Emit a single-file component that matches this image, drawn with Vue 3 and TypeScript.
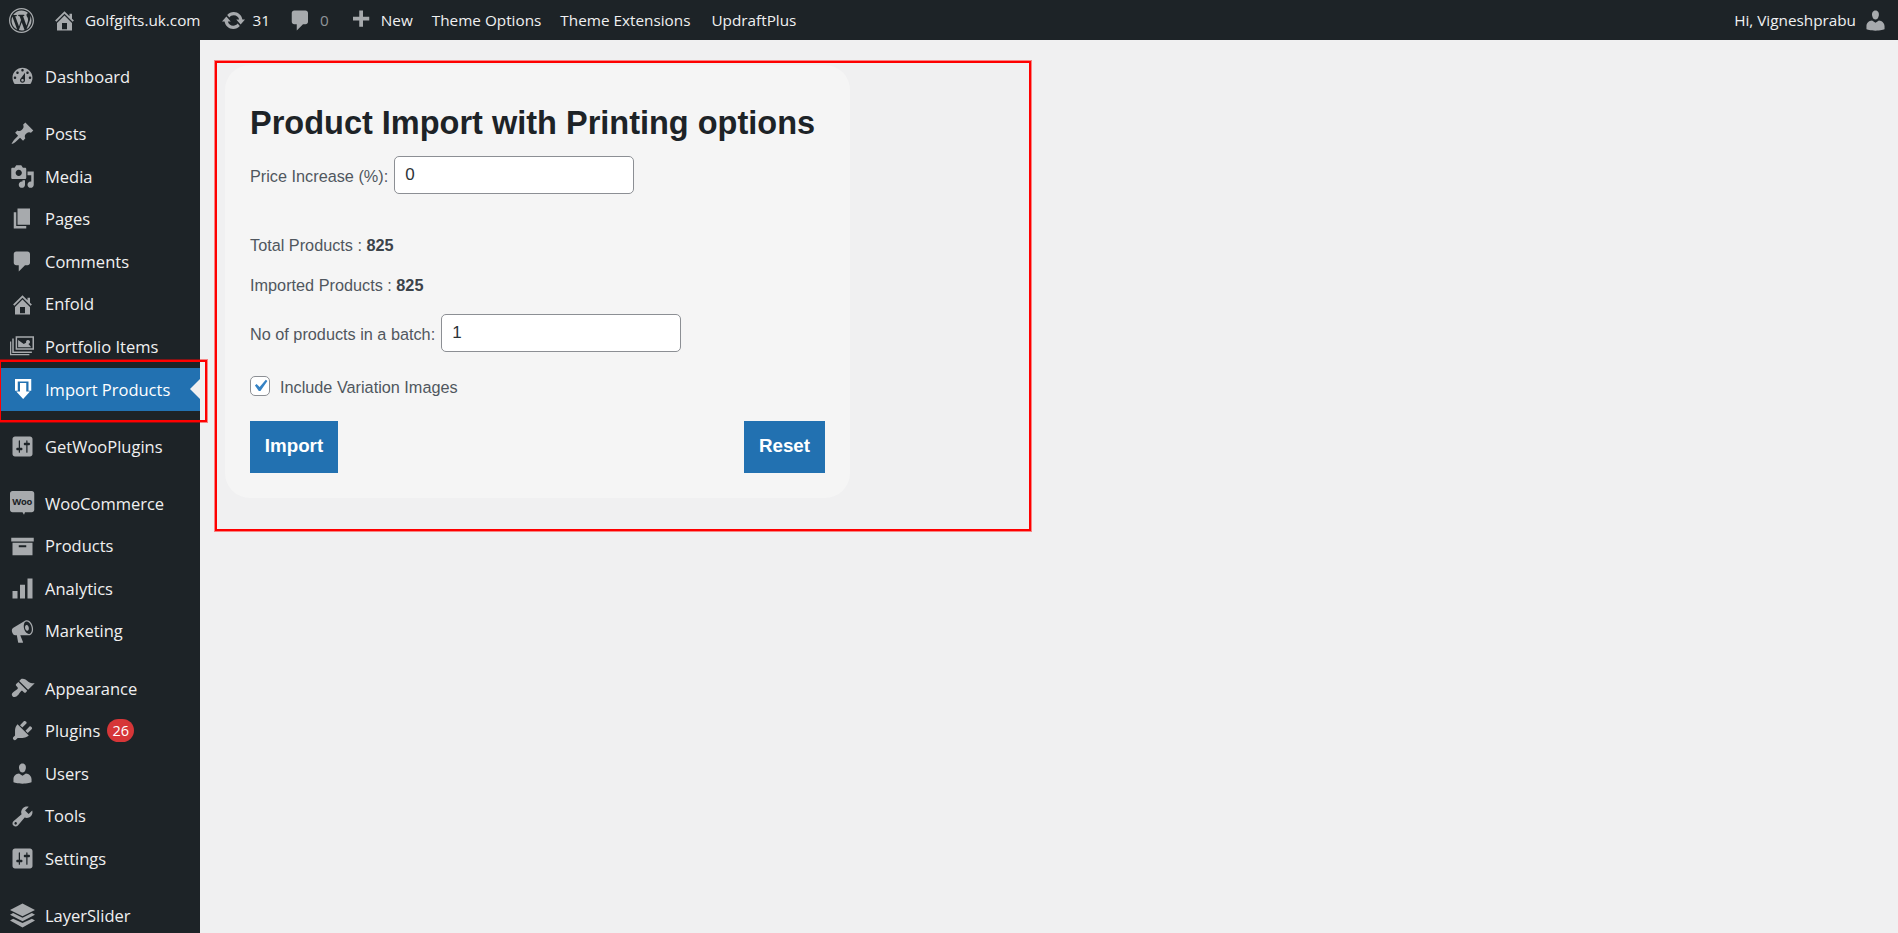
<script setup lang="ts">
interface MenuItem {
  label: string
  icon: string
  gap?: boolean
  current?: boolean
  badge?: string
  woo?: boolean
}

const icons: Record<string, string> = {
  logo: 'M20 10c0-5.52-4.48-10-10-10S0 4.48 0 10s4.48 10 10 10 10-4.48 10-10zM10 1.01c4.96 0 8.99 4.02 8.99 8.99s-4.03 8.99-8.99 8.99S1.01 14.96 1.01 10 5.04 1.01 10 1.01zM8.01 14.82L4.96 6.61c.49-.03 1.05-.08 1.05-.08.43-.05.38-1.01-.06-.99 0 0-1.29.1-2.13.1-.15 0-.33 0-.52-.01 1.44-2.17 3.9-3.6 6.7-3.6 2.09 0 3.99.79 5.41 2.09-.6-.08-1.45.35-1.45 1.42 0 .66.38 1.22.79 1.88.31.54.5 1.22.5 2.21 0 1.34-1.27 4.48-1.27 4.48l-2.71-7.5c.48-.03.75-.16.75-.16.43-.05.38-1.1-.05-1.08 0 0-1.3.11-2.14.11-.78 0-2.11-.11-2.11-.11-.43-.02-.48 1.06-.05 1.08l.84.08 1.12 3.04zm6.02 2.15L16.64 10s.67-1.69.39-3.81c.63 1.14.94 2.42.94 3.81 0 2.96-1.56 5.58-3.94 6.97zM2.68 6.77L6.5 17.25c-2.67-1.3-4.47-4.08-4.47-7.25 0-1.16.2-2.23.65-3.23zm7.45 4.53l2.29 6.25c-.75.27-1.57.42-2.42.42-.72 0-1.41-.11-2.06-.3z',
  home: 'M16 8.5l1.53 1.53-1.06 1.06L10 4.62l-6.47 6.47-1.06-1.06L10 2.5l4 4v-2h2v4zm-6-2.46l6 5.99V18H4v-5.97zM12 17v-5H8v5h4z',
  update: 'M10.2 3.28c3.53 0 6.43 2.61 6.92 6h2.08l-3.5 4-3.5-4h2.32c-.45-1.97-2.21-3.45-4.32-3.45-1.45 0-2.73.71-3.54 1.78L4.95 5.66C6.23 4.2 8.11 3.28 10.2 3.28zm-.4 13.44c-3.52 0-6.43-2.61-6.92-6H.8l3.5-4c1.17 1.33 2.33 2.67 3.5 4H5.48c.45 1.97 2.21 3.45 4.32 3.45 1.45 0 2.73-.71 3.54-1.78l1.71 1.95c-1.28 1.46-3.15 2.38-5.25 2.38z',
  comment: 'M5 2h9c1.1 0 2 .9 2 2v7c0 1.1-.9 2-2 2h-2l-5 5v-5H5c-1.1 0-2-.9-2-2V4c0-1.1.9-2 2-2z',
  plus: 'M17 7v3h-5v5H9v-5H4V7h5V2h3v5h5z',
  user: 'M10 9.25c-2.27 0-2.73-3.44-2.73-3.44C7 4.02 7.82 2 9.97 2c2.16 0 2.98 2.02 2.71 3.81 0 0-.41 3.44-2.68 3.44zm0 2.57L12.72 10c2.39 0 4.52 2.33 4.52 4.53v2.49s-3.65 1.13-7.24 1.13c-3.65 0-7.24-1.13-7.24-1.13v-2.49c0-2.25 1.94-4.48 4.47-4.48z',
  dashboard: 'M3.76 16h12.48c1.1-1.37 1.76-3.11 1.76-5 0-4.42-3.58-8-8-8s-8 3.58-8 8c0 1.89.66 3.63 1.76 5zM10 4c.55 0 1 .45 1 1s-.45 1-1 1-1-.45-1-1 .45-1 1-1zM6 6c.55 0 1 .45 1 1s-.45 1-1 1-1-.45-1-1 .45-1 1-1zm8 0c.55 0 1 .45 1 1s-.45 1-1 1-1-.45-1-1 .45-1 1-1zm-5.37 5.55L12 7v6c0 1.1-.9 2-2 2s-2-.9-2-2c0-.57.24-1.08.63-1.45zM4 10c.55 0 1 .45 1 1s-.45 1-1 1-1-.45-1-1 .45-1 1-1zm12 0c.55 0 1 .45 1 1s-.45 1-1 1-1-.45-1-1 .45-1 1-1zm-5 3c0-.55-.45-1-1-1s-1 .45-1 1 .45 1 1 1 1-.45 1-1z',
  pin: 'M10.44 3.02l1.82-1.82 6.36 6.35-1.83 1.82c-1.05-.68-2.48-.57-3.41.36l-.75.75c-.92.93-1.04 2.35-.35 3.41l-1.83 1.82-2.41-2.41-2.8 2.79c-.42.42-3.38 2.71-3.8 2.29s1.86-3.39 2.28-3.81l2.79-2.79L4.1 9.36l1.83-1.82c1.05.69 2.48.57 3.4-.36l.75-.75c.93-.92 1.05-2.35.36-3.41z',
  media: 'M13 11V4c0-.55-.45-1-1-1h-1.67L9 1H5L3.67 3H2c-.55 0-1 .45-1 1v7c0 .55.45 1 1 1h10c.55 0 1-.45 1-1zM7 4.5c1.38 0 2.5 1.12 2.5 2.5S8.38 9.5 7 9.5 4.5 8.38 4.5 7 5.62 4.5 7 4.5zM14 6h5v10.5c0 1.38-1.12 2.5-2.5 2.5S14 17.88 14 16.5s1.12-2.5 2.5-2.5c.17 0 .34.02.5.05V9h-3V6zm-4 8.05V13h2v3.5c0 1.38-1.12 2.5-2.5 2.5S7 17.88 7 16.5 8.12 14 9.5 14c.17 0 .34.02.5.05z',
  page: 'M6 15V2h10v13H6zm-1 1h8v2H3V5h2v11z',
  portfolio: 'M4.500 1.800H19.200V12.500H4.500ZM5.700 3V11.300H18V3ZM6.500 10.500V4.800L11 8 13.500 6.500 17 10.500ZM14.400 4.800a1.600 1.600 0 1 1-.01 0ZM3 3.500V14H17.500V15.200H1.800V3.500ZM1 6V16H15.500V17H0V6Z',
  importer: 'M4 1.600H17V11H14.800V3.600H6.200V11H4ZM8 4.800H13V11.500H16L10.500 17.600 5 11.500H8Z',
  settings: 'M18 16V4c0-1.1-.9-2-2-2H4c-1.1 0-2 .9-2 2v12c0 1.1.9 2 2 2h12c1.1 0 2-.9 2-2zM8 11h1c.55 0 1 .45 1 1s-.45 1-1 1H8v1.5c0 .28-.22.5-.5.5s-.5-.22-.5-.5V13H6c-.55 0-1-.45-1-1s.45-1 1-1h1V5.500c0-.28.22-.5.5-.5s.5.22.5.5V11zm5-2h-1c-.55 0-1-.45-1-1s.45-1 1-1h1V5.500c0-.28.22-.5.5-.5s.5.22.5.5V7h1c.55 0 1 .45 1 1s-.45 1-1 1h-1v5.500c0 .28-.22.5-.5.5s-.5-.22-.5-.5V9z',
  woo: 'M2 0H17.400c1.100 0 2 .9 2 2V15c0 1.100-.9 2-2 2H12L11.200 19 10 17H2c-1.100 0-2-.9-2-2V2C0 .9.900 0 2 0z',
  products: 'M19 3v3H1V3h18zM2 7h16v10H2V7zm11 3.500V9H7v1.500h6z',
  chart: 'M18 18V2h-4v16h4zm-6 0V7H8v11h4zm-6 0v-6H2v6h4z',
  megaphone: 'M18.150 5.940c.46 1.620.38 3.220-.02 4.480-.42 1.280-1.260 2.180-2.300 2.480-.16.06-.26.06-.4.06-.06.02-.12.02-.18.02-.06.02-.14.02-.22.02h-6.800l2.220 5.500c.02.14-.06.26-.14.34-.08.1-.24.16-.34.16H6.950c-.1 0-.26-.06-.34-.16-.08-.08-.16-.2-.14-.34l-1-5.500H4.250l-.02-.02c-.5.06-1.080-.18-1.540-.62s-.88-1.080-1.060-1.880c-.24-.8-.2-1.560-.02-2.200.18-.62.58-1.080 1.060-1.300l.02-.02 9-5.400c.1-.06.18-.1.24-.16.06-.04.14-.08.24-.12.16-.08.28-.12.5-.18 1.040-.3 2.240.1 3.220.98s1.760 2.180 2.200 3.780zm-2.580 5.980h-.02c.4-.1.74-.34 1.040-.7.58-.7.86-1.760.86-3.040 0-.64-.1-1.300-.28-1.980-.34-1.360-1.020-2.500-1.780-3.240s-1.680-1.100-2.460-.88c-.82.22-1.400.96-1.700 2-.32 1.040-.28 2.360.06 3.720.38 1.360 1 2.500 1.800 3.240.78.74 1.620 1.100 2.480.88zm-2.540-7.080c.22-.04.42-.02.62.04.38.16.76.48 1.020 1s.42 1.200.42 1.780c0 .3-.04.56-.12.8-.18.48-.44.84-.86.94-.34.1-.8-.06-1.140-.4-.36-.34-.7-.9-.86-1.480-.14-.6-.12-1.200.02-1.700.18-.5.48-.88.9-.98z',
  brush: 'M14.480 11.060L7.410 3.990l1.500-1.500c.5-.56 2.300-.47 3.510.32 1.210.8 1.430 1.280 2.910 2.100 1.180.64 2.450 1.260 4.450.85zm-.71.71L6.700 4.700 4.930 6.470c-.39.39-.39 1.020 0 1.410l1.060 1.060c.39.39.39 1.030 0 1.420-.6.6-1.430 1.110-2.210 1.690-.35.26-.7.53-1.010.84C1.430 13.710.96 15.120 1.980 16.140c.5.5 1.150.77 1.740.71 1.010-.1 1.960-.9 2.550-1.490.3-.31.58-.66.84-1.010.58-.78 1.090-1.610 1.690-2.210.39-.39 1.020-.39 1.410 0l1.060 1.060c.39.39 1.020.39 1.410 0z',
  plugin: 'M13.110 4.360L9.870 7.600 8 5.730l3.240-3.240c.35-.34 1.050-.2 1.560.32.52.51.66 1.210.31 1.550zm-8 1.770l.91-1.120 9.010 9.010-1.190.84c-.71.71-2.630 1.160-3.820 1.160H6.140L4.900 17.260c-.59.59-1.540.59-2.120 0-.59-.58-.59-1.530 0-2.120l1.240-1.240v-3.880c0-1.130.4-3.190 1.090-3.890zm7.260 3.970l3.240-3.240c.34-.35 1.040-.21 1.550.31.52.51.66 1.210.31 1.550l-3.240 3.250z',
  wrench: 'M16.680 9.770c-1.340 1.340-3.300 1.670-4.950.99l-5.410 6.520c-.99.99-2.590.99-3.580 0s-.99-2.590 0-3.570l6.520-5.420c-.68-1.650-.35-3.610.99-4.950 1.280-1.280 3.120-1.620 4.720-1.060l-2.890 2.890 2.820 2.820 2.860-2.870c.53 1.580.18 3.390-1.080 4.650zM3.810 16.210c.4.39 1.040.39 1.430 0 .4-.4.4-1.040 0-1.430-.39-.4-1.030-.4-1.430 0-.39.39-.39 1.030 0 1.430z',
  layers: 'M10 .4L20 5.500 10 10.600 0 5.500ZM2.500 8L10 11.800 17.500 8 20 9.300 10 14.600 0 9.300ZM2.500 12.500L10 16 17.500 12.500 20 14 10 19.500 0 14Z',
}

const menu: MenuItem[] = [
  { label: 'Dashboard', icon: 'dashboard' },
  { label: 'Posts', icon: 'pin', gap: true },
  { label: 'Media', icon: 'media' },
  { label: 'Pages', icon: 'page' },
  { label: 'Comments', icon: 'comment' },
  { label: 'Enfold', icon: 'home' },
  { label: 'Portfolio Items', icon: 'portfolio' },
  { label: 'Import Products', icon: 'importer', current: true },
  { label: 'GetWooPlugins', icon: 'settings', gap: true },
  { label: 'WooCommerce', icon: 'woo', gap: true, woo: true },
  { label: 'Products', icon: 'products' },
  { label: 'Analytics', icon: 'chart' },
  { label: 'Marketing', icon: 'megaphone' },
  { label: 'Appearance', icon: 'brush', gap: true },
  { label: 'Plugins', icon: 'plugin', badge: '26' },
  { label: 'Users', icon: 'user' },
  { label: 'Tools', icon: 'wrench' },
  { label: 'Settings', icon: 'settings' },
  { label: 'LayerSlider', icon: 'layers', gap: true },
]
</script>

<template>
  <div class="root">
    <header class="adminbar">
      <svg class="bar-logo" viewBox="0 0 20 20"><path :d="icons.logo" /></svg>
      <a class="bar-item site"><svg viewBox="0 0 20 20"><path :d="icons.home" /></svg>Golfgifts.uk.com</a>
      <a class="bar-item updates"><svg viewBox="0 0 20 20"><path :d="icons.update" /></svg>31</a>
      <a class="bar-item comments"><svg viewBox="0 0 20 20"><path :d="icons.comment" /></svg><span class="dim">0</span></a>
      <a class="bar-item new"><svg viewBox="0 0 20 20"><path :d="icons.plus" /></svg>New</a>
      <a class="bar-item opts">Theme Options</a>
      <a class="bar-item exts">Theme Extensions</a>
      <a class="bar-item">UpdraftPlus</a>
      <a class="bar-item howdy">Hi, Vigneshprabu<svg viewBox="0 0 20 20"><path :d="icons.user" /></svg></a>
    </header>

    <div class="body">
      <nav class="sidebar">
        <a
          v-for="item in menu"
          :key="item.label"
          class="menu-item"
          :class="{ gap: item.gap, current: item.current }"
        >
          <span class="menu-icon">
            <svg viewBox="0 0 20 20">
              <path :d="icons[item.icon]" />
              <text v-if="item.woo" x="9.700" y="11" text-anchor="middle" class="woo-text">Woo</text>
            </svg>
          </span>
          <span class="menu-label">{{ item.label }}</span>
          <span v-if="item.badge" class="badge">{{ item.badge }}</span>
        </a>
        <div class="side-mark"></div>
      </nav>

      <main class="main">
        <section class="frame">
          <div class="card">
            <h1>Product Import with Printing options</h1>
            <div class="field">
              <label>Price Increase (%):</label>
              <input type="text" value="0" />
            </div>
            <p class="stat first">Total Products : <b>825</b></p>
            <p class="stat">Imported Products : <b>825</b></p>
            <div class="field batch">
              <label>No of products in a batch:</label>
              <input type="text" value="1" />
            </div>
            <div class="check">
              <span class="box">
                <svg viewBox="0 0 20 20"><path d="M14.830 4.890l1.340.94-5.810 8.380H9.020L5.780 9.670l1.340-1.250 2.570 2.400z" /></svg>
              </span>
              <span class="check-label">Include Variation Images</span>
            </div>
            <div class="actions">
              <button type="button" class="import">Import</button>
              <button type="button" class="reset">Reset</button>
            </div>
          </div>
        </section>
      </main>
    </div>
  </div>
</template>

<style scoped>
.root {
  height: 100vh;
  overflow: hidden;
  background: #f0f0f1;
  display: flex;
  flex-direction: column;
}
.adminbar {
  height: 40px;
  flex: none;
  background: #1d2327;
  display: flex;
  align-items: center;
  color: #f0f0f1;
  font: 15.300px/40px "Open Sans", "Noto Sans", sans-serif;
}
.adminbar svg {
  fill: #a7aaad;
  flex: none;
}
.bar-logo {
  width: 25px;
  height: 25px;
  margin-left: 9px;
}
.bar-item {
  display: flex;
  align-items: center;
  white-space: nowrap;
}
.bar-item svg {
  width: 25px;
  height: 25px;
}
.site {
  margin-left: 18px;
}
.site svg {
  margin-right: 8px;
}
.updates {
  margin-left: 20px;
}
.updates svg {
  margin-right: 7px;
}
.comments {
  margin-left: 18px;
}
.comments svg {
  margin-right: 7px;
}
.dim {
  color: #8f9499;
}
.new {
  margin-left: 19px;
}
.new svg {
  margin-right: 8px;
}
.opts {
  margin-left: 19px;
}
.exts {
  margin-left: 19px;
}
.exts + .bar-item {
  margin-left: 21px;
}
.howdy {
  margin-left: auto;
  margin-right: 10px;
}
.howdy svg {
  margin-left: 7px;
}
.body {
  flex: 1;
  display: flex;
  min-height: 0;
}
.sidebar {
  width: 200px;
  flex: none;
  background: #1d2327;
  padding-top: 15.300px;
  position: relative;
  color: #f0f0f1;
  font: 16.500px/42.500px "Open Sans", "Noto Sans", sans-serif;
}
.menu-item {
  display: flex;
  align-items: center;
  height: 42.600px;
  position: relative;
  white-space: nowrap;
}
.menu-item.gap {
  margin-top: 14.500px;
}
.menu-icon {
  width: 45px;
  height: 100%;
  flex: none;
  display: flex;
  align-items: center;
  justify-content: center;
}
.menu-icon svg {
  width: 25px;
  height: 25px;
  fill: #a7aaad;
}
.menu-label {
  padding-top: 1px;
}
.woo-text {
  font: 700 7.500px "Open Sans", sans-serif;
  letter-spacing: -0.2px;
  fill: #1d2327;
}
.current {
  background: #2271b1;
  color: #fff;
}
.current .menu-icon svg {
  fill: #fff;
}
.current::after {
  content: "";
  position: absolute;
  right: 0;
  top: 50%;
  margin-top: -10px;
  border: 10px solid transparent;
  border-right-color: #f0f0f1;
}
.badge {
  margin-left: 7px;
  min-width: 27px;
  height: 23px;
  border-radius: 12px;
  background: #d63638;
  color: #fff;
  font-size: 14.500px;
  line-height: 23px;
  text-align: center;
}
.side-mark {
  position: absolute;
  left: -1px;
  top: 320px;
  width: 208px;
  height: 62px;
  box-sizing: border-box;
  border: 2px solid #ff0000;
  box-shadow: 0 0 0 1px rgba(255, 0, 0, 0.45);
  pointer-events: none;
}
.main {
  flex: 1;
  padding: 21px 15px;
  min-width: 0;
}
.frame {
  width: 816px;
  height: 470px;
  box-sizing: border-box;
  border: 2px solid #ff0000;
  box-shadow: 0 0 0 1px rgba(255, 0, 0, 0.45);
  padding: 2px 0 0 8px;
}
.card {
  width: 625px;
  height: 433px;
  box-sizing: border-box;
  padding: 25px;
  background: #f5f5f5;
  border-radius: 25px;
  color: #50575e;
  font: 16.250px/24px "Liberation Sans", Arial, sans-serif;
}
h1 {
  margin: 8px 0;
  color: #1d2327;
  font: 700 32.500px/50px "Liberation Sans", Arial, sans-serif;
  white-space: nowrap;
}
.field {
  display: flex;
  align-items: center;
  gap: 6px;
  height: 38px;
}
.field label {
  padding-top: 2px;
}
.field input {
  width: 240px;
  height: 38px;
  box-sizing: border-box;
  padding: 0 10px;
  border: 1px solid #8c8f94;
  border-radius: 5px;
  background: #fff;
  color: #2c3338;
  font: 17px "Liberation Sans", Arial, sans-serif;
}
.stat {
  margin: 16px 0 0;
  height: 24px;
  line-height: 24px;
}
.stat.first {
  margin-top: 39px;
}
.stat b {
  color: #3c434a;
}
.batch {
  margin-top: 17px;
}
.check {
  margin-top: 24px;
  display: flex;
  align-items: center;
  gap: 10px;
  height: 20px;
}
.check-label {
  padding-top: 1px;
}
.box {
  width: 20px;
  height: 20px;
  box-sizing: border-box;
  border: 1px solid #8c8f94;
  border-radius: 5px;
  background: #fff;
  display: block;
}
.box svg {
  display: block;
  width: 24px;
  height: 24px;
  margin: -3px;
  fill: #3582c4;
}
.actions {
  margin-top: 25px;
  display: flex;
  justify-content: space-between;
}
.actions button {
  height: 52px;
  border: 0;
  background: #2271b1;
  color: #fff;
  padding: 0 0 2px;
  font: 700 18.750px "Liberation Sans", Arial, sans-serif;
}
.import {
  width: 88px;
}
.reset {
  width: 81px;
}
</style>
